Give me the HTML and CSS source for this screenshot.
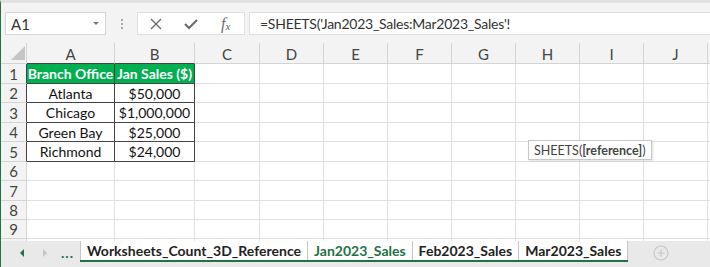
FILE: index.html
```html
<!DOCTYPE html>
<html lang="en">

<head>
    <meta charset="UTF-8">
    <title>SHEETS 3D reference</title>
    <link rel="stylesheet" href="styles.css">
</head>

<body>
    <div class="app">
        <div class="formula-bar">
            <div class="name-box">
                <span>A1</span>
                <span class="drop"></span>
            </div>
            <div class="grip"><i></i><i></i><i></i></div>
            <div class="fx-buttons">
                <svg width="14" height="14" viewBox="0 0 14 14"><path d="M2 2 L12 12 M12 2 L2 12" stroke="#6b6b6b" stroke-width="1.4" fill="none"/></svg>
                <svg width="16" height="14" viewBox="0 0 16 14"><path d="M2 7 L6 11 L14 3" stroke="#6b6b6b" stroke-width="2" fill="none"/></svg>
                <span class="fx">f<sub>x</sub></span>
            </div>
            <div class="formula-input">=SHEETS('Jan2023_Sales:Mar2023_Sales'!</div>
        </div>

        <div class="sheet">
            <div class="grid">
                <div class="corner"><span></span></div>
                <div class="colhead dark-b">A</div>
                <div class="colhead dark-b">B</div>
                <div class="colhead">C</div>
                <div class="colhead">D</div>
                <div class="colhead">E</div>
                <div class="colhead">F</div>
                <div class="colhead">G</div>
                <div class="colhead">H</div>
                <div class="colhead">I</div>
                <div class="colhead">J</div>
                <div class="colhead"></div>

                <div class="rowhead dark-r">1</div>
                <div class="cell data head">Branch Office</div>
                <div class="cell data head">Jan Sales ($)</div>
                <div class="cell"></div><div class="cell"></div><div class="cell"></div><div class="cell"></div><div class="cell"></div><div class="cell"></div><div class="cell"></div><div class="cell"></div><div class="cell"></div>

                <div class="rowhead dark-r">2</div>
                <div class="cell data">Atlanta</div>
                <div class="cell data">$50,000</div>
                <div class="cell"></div><div class="cell"></div><div class="cell"></div><div class="cell"></div><div class="cell"></div><div class="cell"></div><div class="cell"></div><div class="cell"></div><div class="cell"></div>

                <div class="rowhead dark-r">3</div>
                <div class="cell data">Chicago</div>
                <div class="cell data">$1,000,000</div>
                <div class="cell"></div><div class="cell"></div><div class="cell"></div><div class="cell"></div><div class="cell"></div><div class="cell"></div><div class="cell"></div><div class="cell"></div><div class="cell"></div>

                <div class="rowhead dark-r">4</div>
                <div class="cell data">Green Bay</div>
                <div class="cell data">$25,000</div>
                <div class="cell"></div><div class="cell"></div><div class="cell"></div><div class="cell"></div><div class="cell"></div><div class="cell"></div><div class="cell"></div><div class="cell"></div><div class="cell"></div>

                <div class="rowhead dark-r">5</div>
                <div class="cell data">Richmond</div>
                <div class="cell data">$24,000</div>
                <div class="cell"></div><div class="cell"></div><div class="cell"></div><div class="cell"></div><div class="cell"></div><div class="cell"></div><div class="cell"></div><div class="cell"></div><div class="cell"></div>

                <div class="rowhead">6</div>
                <div class="cell"></div><div class="cell"></div><div class="cell"></div><div class="cell"></div><div class="cell"></div><div class="cell"></div><div class="cell"></div><div class="cell"></div><div class="cell"></div><div class="cell"></div><div class="cell"></div>

                <div class="rowhead">7</div>
                <div class="cell"></div><div class="cell"></div><div class="cell"></div><div class="cell"></div><div class="cell"></div><div class="cell"></div><div class="cell"></div><div class="cell"></div><div class="cell"></div><div class="cell"></div><div class="cell"></div>

                <div class="rowhead">8</div>
                <div class="cell"></div><div class="cell"></div><div class="cell"></div><div class="cell"></div><div class="cell"></div><div class="cell"></div><div class="cell"></div><div class="cell"></div><div class="cell"></div><div class="cell"></div><div class="cell"></div>

                <div class="rowhead">9</div>
                <div class="cell"></div><div class="cell"></div><div class="cell"></div><div class="cell"></div><div class="cell"></div><div class="cell"></div><div class="cell"></div><div class="cell"></div><div class="cell"></div><div class="cell"></div><div class="cell"></div>

                <div class="rowhead"></div>
                <div class="cell"></div><div class="cell"></div><div class="cell"></div><div class="cell"></div><div class="cell"></div><div class="cell"></div><div class="cell"></div><div class="cell"></div><div class="cell"></div><div class="cell"></div><div class="cell"></div>
            </div>

            <div class="tooltip">SHEETS(<b>[reference]</b>)</div>
        </div>

        <div class="tab-bar">
            <div class="nav">
                <span class="arrow left"></span>
                <span class="arrow right"></span>
                <span class="more">...</span>
            </div>
            <div class="tabs">
                <div class="tab">Worksheets_Count_3D_Reference</div>
                <div class="tab active">Jan2023_Sales</div>
                <div class="tab">Feb2023_Sales</div>
                <div class="tab">Mar2023_Sales</div>
            </div>
            <div class="add-sheet">
                <svg width="16" height="16" viewBox="0 0 16 16"><circle cx="8" cy="8" r="7" stroke="#c6c6c6" stroke-width="1.2" fill="none"/><path d="M8 4.5 V11.5 M4.5 8 H11.5" stroke="#c6c6c6" stroke-width="1.2"/></svg>
            </div>
        </div>
    </div>
</body>

</html>
```

FILE: styles.css
```css
body {
    margin: 0;
    font-family: Lato, "Liberation Sans", sans-serif;
    color: #222;
}

.app {
    width: 710px;
    height: 267px;
    overflow: hidden;
    background-color: #f3f3f3;
    border-left: 1px solid #217346;
    box-sizing: border-box;
    border-top: 3px solid #e1e1e1;
}

/* formula bar */
.formula-bar {
    display: flex;
    align-items: stretch;
    height: 23px;
    margin: 9px 0 8px 4px;
}

.name-box {
    width: 101px;
    background-color: white;
    border: 1px solid #d6d6d6;
    box-sizing: border-box;
    display: flex;
    align-items: center;
    justify-content: space-between;
    padding: 0 6px 0 5px;
    font-size: 15px;
    color: #333;
}

.drop {
    width: 0;
    height: 0;
    border-left: 3px solid transparent;
    border-right: 3px solid transparent;
    border-top: 3px solid #777;
}

.grip {
    width: 31px;
    display: flex;
    flex-direction: column;
    align-items: center;
    justify-content: center;
    gap: 2px;
}

.grip i {
    width: 2px;
    height: 2px;
    background-color: #a8a8a8;
}

.fx-buttons {
    width: 108px;
    background-color: white;
    border: 1px solid #e0e0e0;
    box-sizing: border-box;
    display: flex;
    align-items: center;
    padding-left: 11px;
    gap: 20px;
}

.fx {
    font-family: "Liberation Serif", serif;
    font-style: italic;
    font-size: 16px;
    color: #6b6b6b;
    margin-left: 2px;
}

.fx sub {
    font-size: 11px;
    vertical-align: -1px;
}

.formula-input {
    flex: 1;
    margin-left: 4px;
    background-color: white;
    border: 1px solid #e0e0e0;
    border-right: none;
    display: flex;
    align-items: center;
    padding-left: 10px;
    font-size: 14px;
    letter-spacing: -0.25px;
    color: #333;
}

/* grid */
.sheet {
    position: relative;
    height: 198px;
    background-color: white;
    overflow: hidden;
}

.grid {
    display: grid;
    grid-template-columns: 26px 88px 80px 65px 64px 64px 64px 64px 64px 64px 64px 10px;
    grid-template-rows: 21px 20px 19px 20px 19px 20px 19px 20px 19px 19px 19px;
    font-size: 14px;
}

.grid > div {
    box-sizing: border-box;
    border-right: 1px solid #e1e1e1;
    border-bottom: 1px solid #e1e1e1;
    display: flex;
    align-items: center;
    justify-content: center;
    white-space: nowrap;
}

.corner {
    background-color: #f3f3f3;
    position: relative;
}

.corner span {
    position: absolute;
    right: 1px;
    bottom: 3px;
    width: 0;
    height: 0;
    border-left: 14px solid transparent;
    border-bottom: 14px solid #c6c6c6;
}

.grid > .colhead,
.grid > .rowhead,
.grid > .corner {
    background-color: #f3f3f3;
    border-color: #d4d4d4;
    color: #444;
    font-size: 15px;
}

.grid > .colhead {
    padding-top: 2px;
}

.grid > .dark-b {
    border-bottom-color: #444;
}

.grid > .dark-r {
    border-right-color: #444;
}

.grid > .data {
    border-color: #444;
    color: #111;
}

.grid > .head {
    background-color: #00b050;
    color: white;
    font-weight: bold;
}

.tooltip {
    position: absolute;
    left: 527px;
    top: 97px;
    height: 20px;
    padding: 0 5px;
    background-color: white;
    border: 1px solid #c8c8c8;
    box-shadow: 1px 1px 2px rgba(0, 0, 0, 0.12);
    font-size: 12.5px;
    color: #444;
    display: flex;
    align-items: center;
    box-sizing: border-box;
}

/* sheet tabs */
.tab-bar {
    height: 26px;
    display: flex;
    align-items: flex-start;
    background-color: #e9e9e9;
}

.nav {
    width: 79px;
    display: flex;
    align-items: center;
    height: 24px;
}

.arrow {
    width: 0;
    height: 0;
    border-top: 4px solid transparent;
    border-bottom: 4px solid transparent;
}

.arrow.left {
    margin-left: 19px;
    border-right: 4px solid #217346;
}

.arrow.right {
    margin-left: 19px;
    border-left: 4px solid #c6c6c6;
}

.more {
    margin-left: 14px;
    font-weight: bold;
    color: #217346;
    font-size: 14px;
    letter-spacing: 1px;
    margin-top: -2px;
}

.tabs {
    display: flex;
    border-bottom: 2px solid #217346;
}

.tab {
    height: 19px;
    background-color: white;
    border-left: 1px solid #c6c6c6;
    padding: 0 6px;
    display: flex;
    align-items: center;
    font-size: 14px;
    font-weight: bold;
    color: #222;
}

.tab:last-child {
    border-right: 1px solid #c6c6c6;
}

.tab.active {
    color: #217346;
}

.add-sheet {
    margin-left: 25px;
    height: 24px;
    display: flex;
    align-items: center;
}
```
